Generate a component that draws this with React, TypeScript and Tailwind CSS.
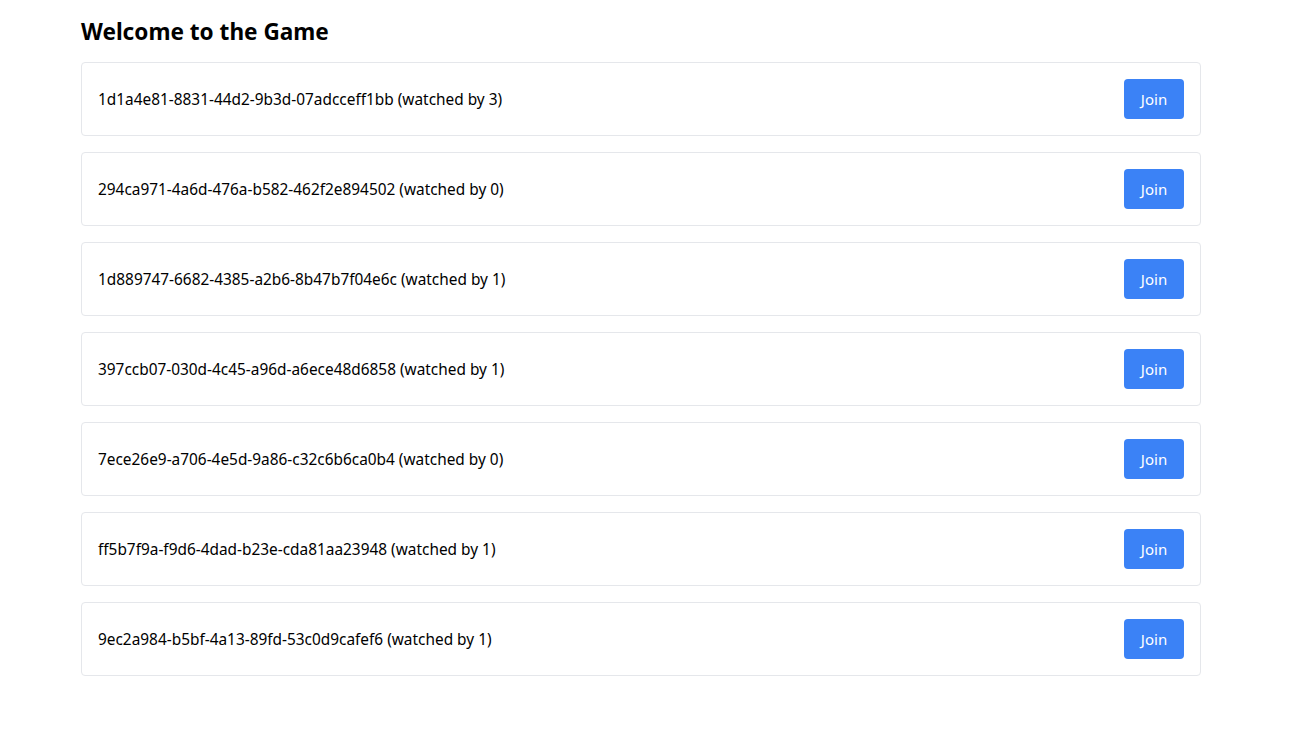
import React from "react"

const games = [
  { id: "1d1a4e81-8831-44d2-9b3d-07adcceff1bb", watchers: 3 },
  { id: "294ca971-4a6d-476a-b582-462f2e894502", watchers: 0 },
  { id: "1d889747-6682-4385-a2b6-8b47b7f04e6c", watchers: 1 },
  { id: "397ccb07-030d-4c45-a96d-a6ece48d6858", watchers: 1 },
  { id: "7ece26e9-a706-4e5d-9a86-c32c6b6ca0b4", watchers: 0 },
  { id: "ff5b7f9a-f9d6-4dad-b23e-cda81aa23948", watchers: 1 },
  { id: "9ec2a984-b5bf-4a13-89fd-53c0d9cafef6", watchers: 1 },
]

export default function App() {
  return (
    <div className="min-h-screen bg-white pl-[81px] pt-4 text-black" style={{ fontFamily: '"Noto Sans", "Open Sans", sans-serif' }}>
      <div className="w-[1120px]">
        {/* Title */}
        <h1 className="mb-[14px] text-[22.6px] leading-8 font-bold">Welcome to the Game</h1>

        {/* Game list */}
        <div className="flex flex-col gap-4">
          {games.map((g) => (
            <div key={g.id} className="flex items-center justify-between rounded border border-[#e5e7eb] p-4">
              <span className="pt-[2px] text-[15.4px]">
                {g.id} (watched by {g.watchers})
              </span>
              <button className="h-10 w-[60px] rounded bg-[#3b82f6] text-[15px] text-white">Join</button>
            </div>
          ))}
        </div>
      </div>
    </div>
  )
}
